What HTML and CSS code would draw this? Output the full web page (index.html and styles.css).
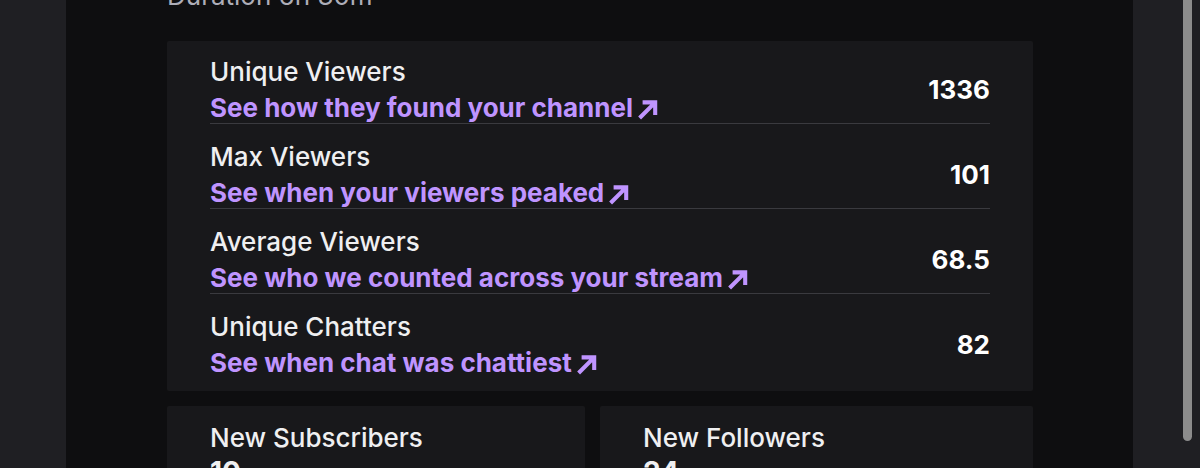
FILE: index.html
```html
<!DOCTYPE html>
<html lang="en">
<head>
<meta charset="utf-8">
<title>Stream Summary</title>
<link rel="stylesheet" href="styles.css">
</head>
<body>
<div class="app">
  <aside class="rail-left"></aside>
  <main class="main">
    <div class="duration">Duration 6h 30m</div>
    <section class="card stats">
      <div class="row">
        <div class="info">
          <div class="label">Unique Viewers</div>
          <a class="link" href="#">See how they found your channel<svg class="arrow" viewBox="0 0 20 20"><path d="M3 17.5 L16 4.5 M5.5 4.5 H16 V15"/></svg></a>
        </div>
        <div class="value">1336</div>
      </div>
      <div class="row">
        <div class="info">
          <div class="label">Max Viewers</div>
          <a class="link" href="#">See when your viewers peaked<svg class="arrow" viewBox="0 0 20 20"><path d="M3 17.5 L16 4.5 M5.5 4.5 H16 V15"/></svg></a>
        </div>
        <div class="value">101</div>
      </div>
      <div class="row">
        <div class="info">
          <div class="label">Average Viewers</div>
          <a class="link" href="#">See who we counted across your stream<svg class="arrow" viewBox="0 0 20 20"><path d="M3 17.5 L16 4.5 M5.5 4.5 H16 V15"/></svg></a>
        </div>
        <div class="value">68.5</div>
      </div>
      <div class="row">
        <div class="info">
          <div class="label">Unique Chatters</div>
          <a class="link" href="#">See when chat was chattiest<svg class="arrow" viewBox="0 0 20 20"><path d="M3 17.5 L16 4.5 M5.5 4.5 H16 V15"/></svg></a>
        </div>
        <div class="value">82</div>
      </div>
    </section>
    <div class="pair">
      <section class="card small">
        <div class="label">New Subscribers</div>
        <div class="big">10</div>
      </section>
      <section class="card small">
        <div class="label">New Followers</div>
        <div class="big">24</div>
      </section>
    </div>
  </main>
  <aside class="rail-right"><div class="thumb"></div></aside>
</div>
</body>
</html>
```
FILE: styles.css
```css
html, body {
  margin: 0;
  padding: 0;
  height: 468px;
  overflow: hidden;
  background: #0e0e10;
  font-family: Inter, "Noto Sans", "Liberation Sans", sans-serif;
  color: #efeff1;
}

.app {
  display: flex;
  height: 468px;
}

.rail-left {
  width: 66px;
  flex: none;
  background: #1f1f23;
}

.main {
  flex: 1;
  padding: 0 100px 0 101px;
  background: #0e0e10;
}

.duration {
  margin-top: -21px;
  height: 34px;
  line-height: 34px;
  font-size: 26px;
  color: #adadb8;
}

.card {
  background: #18181b;
  border-radius: 2px;
}

.stats {
  margin-top: 28px;
  padding: 0 43px 13px 43px;
}

.row {
  display: flex;
  align-items: center;
  justify-content: space-between;
  padding-top: 16px;
  border-bottom: 1px solid #3a3a3f;
}

.row:first-child {
  padding-top: 14px;
}

.row:last-child {
  border-bottom: none;
}

.label {
  font-size: 26px;
  line-height: 34px;
  font-weight: 500;
  color: #efeff1;
}

.link {
  display: flex;
  align-items: center;
  margin-top: 3px;
  font-size: 26px;
  line-height: 31px;
  font-weight: 700;
  color: #bf94ff;
  text-decoration: none;
}

.arrow {
  width: 24px;
  height: 24px;
  margin-left: 3px;
  margin-top: 2px;
  fill: none;
  stroke: #bf94ff;
  stroke-width: 3.4;
  stroke-linecap: butt;
  stroke-linejoin: miter;
}

.value {
  font-size: 26px;
  font-weight: 700;
  color: #ffffff;
}

.pair {
  margin-top: 15px;
  display: grid;
  grid-template-columns: 418px 1fr;
  gap: 15px;
}

.small {
  padding: 15px 43px 0 43px;
  height: 80px;
}

.big {
  font-size: 28px;
  line-height: 34px;
  font-weight: 700;
}

.rail-right {
  width: 67px;
  flex: none;
  background: #1f1f23;
  position: relative;
}

.thumb {
  position: absolute;
  left: 50px;
  top: -10px;
  width: 9px;
  height: 451px;
  background: #8c8c8c;
  border-radius: 5px;
}
```
